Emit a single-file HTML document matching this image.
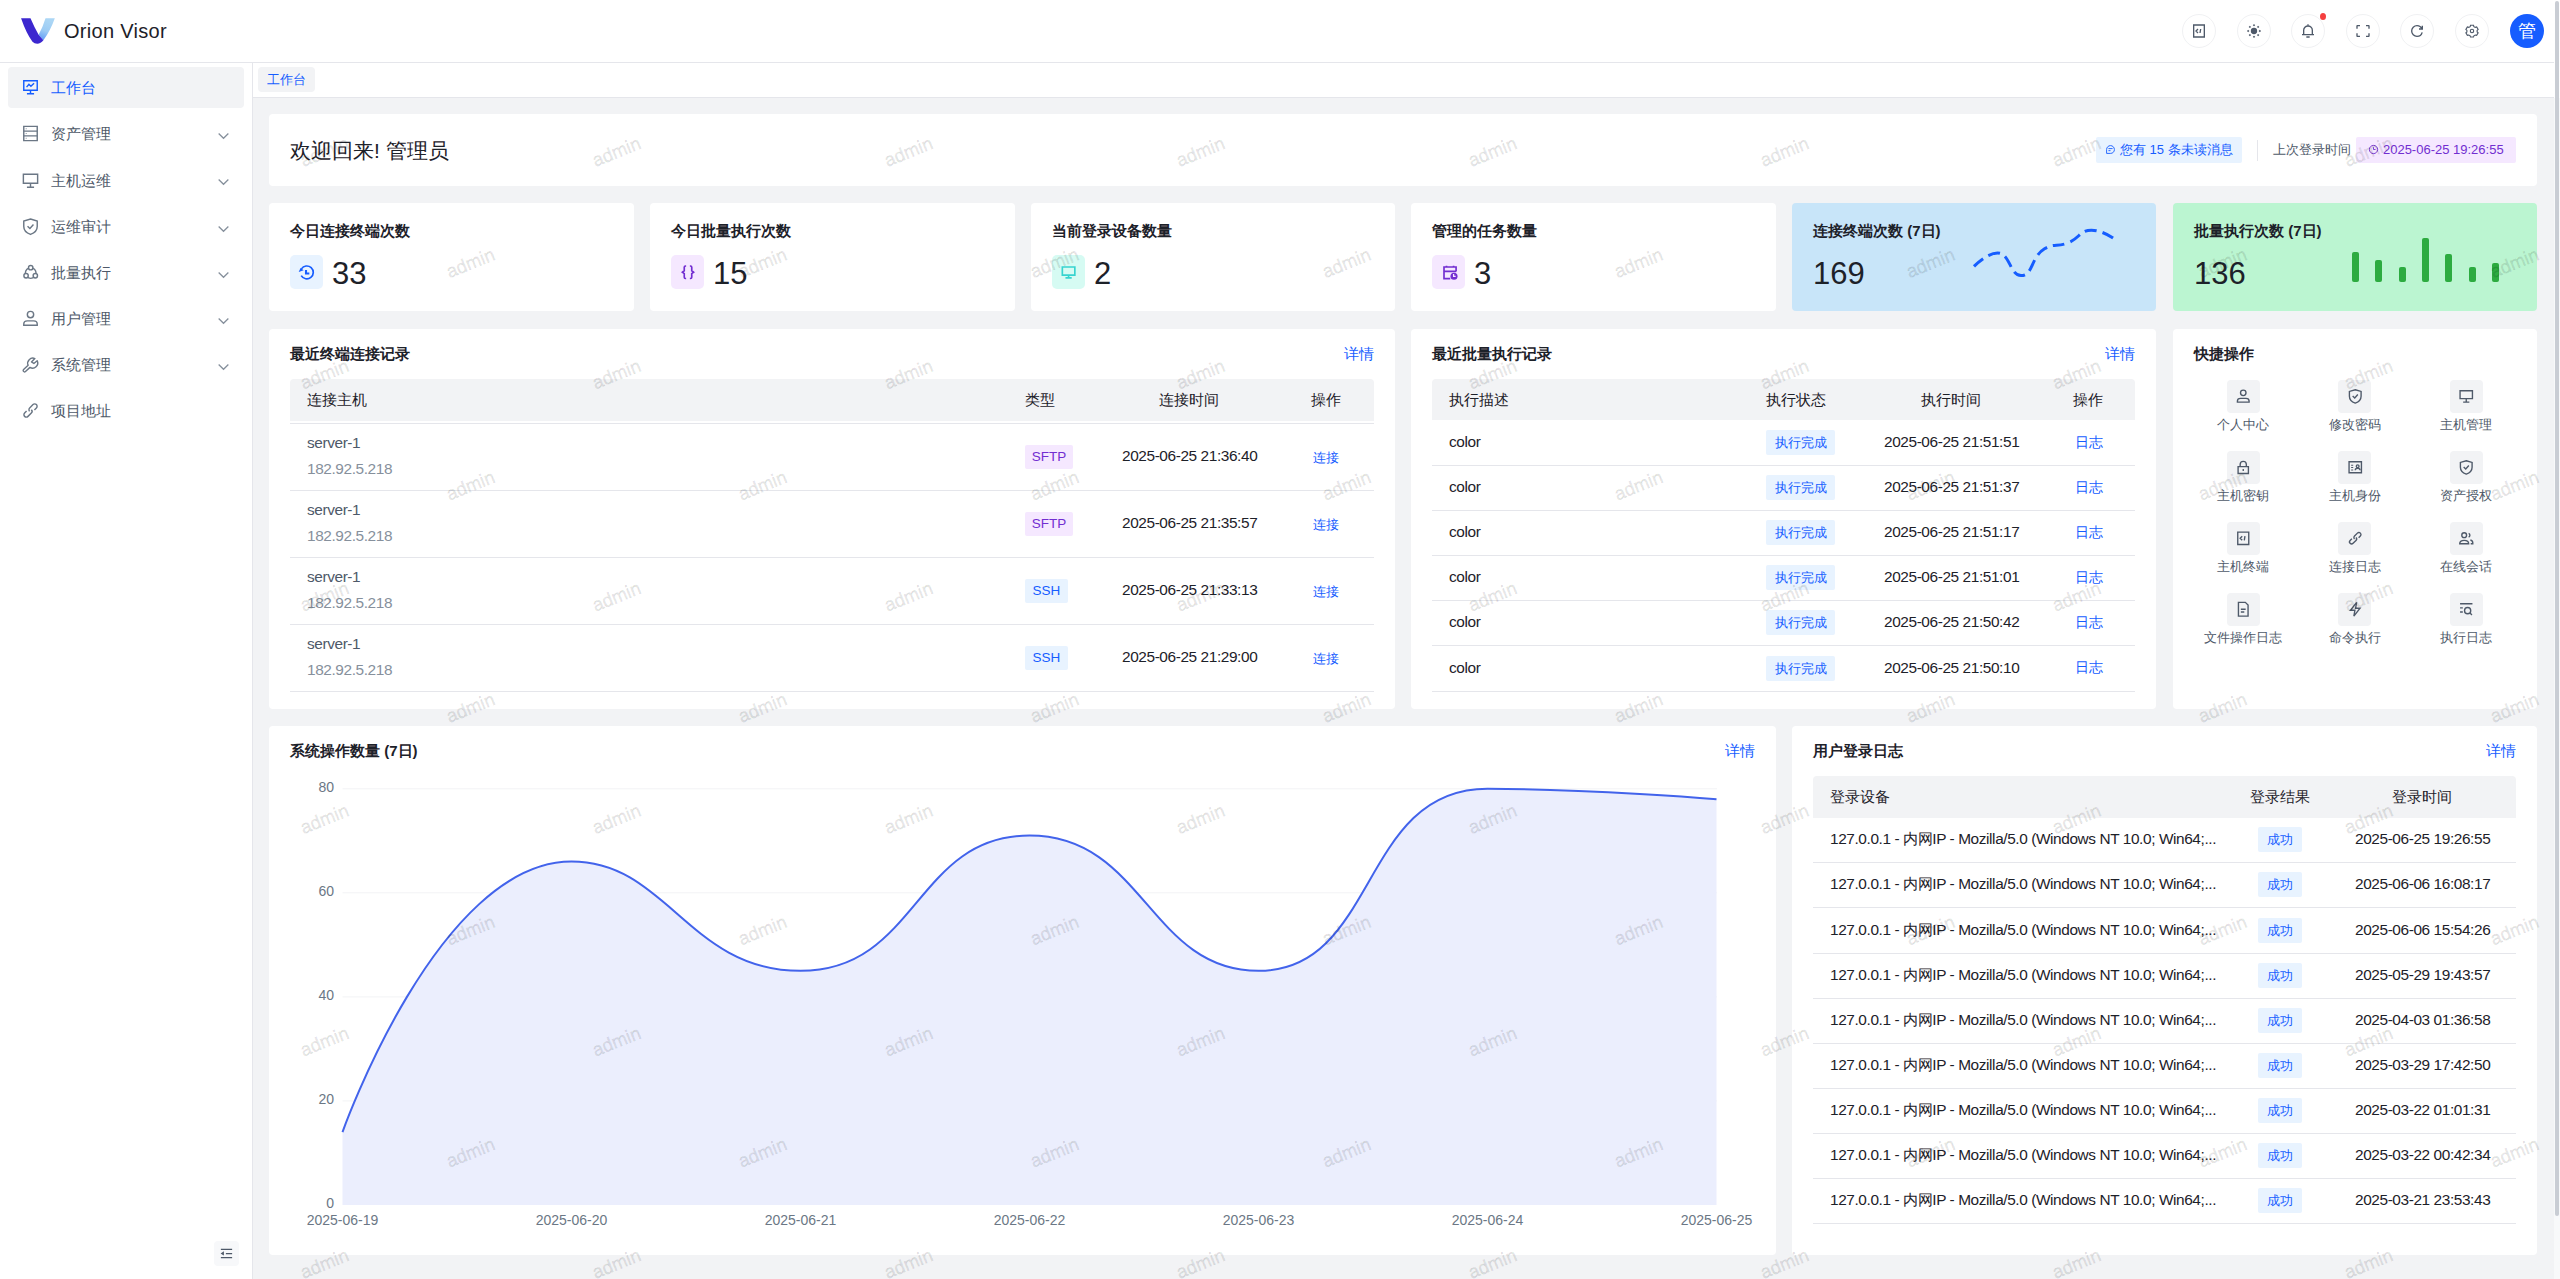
<!DOCTYPE html><html><head><meta charset="utf-8"><title>Orion Visor</title><style>
*{box-sizing:border-box;margin:0;padding:0}
html,body{width:2560px;height:1279px;overflow:hidden}
body{font-family:"Liberation Sans",sans-serif;background:#f2f3f5;color:#1d2129;position:relative;font-size:14px}
.a{position:absolute}
#hdr{left:0;top:0;width:2560px;height:63px;background:#fff;border-bottom:1px solid #e5e6eb}
#side{left:0;top:63px;width:253px;height:1216px;background:#fff;border-right:1px solid #e5e6eb}
#tabs{left:253px;top:63px;width:2301px;height:35px;background:#fff;border-bottom:1px solid #e5e6eb}
.card{position:absolute;background:#fff;border-radius:4px}
.ttl{position:absolute;font-weight:bold;font-size:15px;color:#1d2129;white-space:nowrap}
.more{position:absolute;color:#165dff;font-size:15px;white-space:nowrap}
.ic{fill:none;stroke:currentColor;stroke-width:4;stroke-linecap:butt;stroke-linejoin:miter}
.mi{position:absolute;left:8px;width:236px;height:41px;border-radius:4px;color:#4e5969;font-size:15px}
.mi svg{position:absolute}
.mi span{position:absolute;left:42.5px;top:11px;white-space:nowrap;font-size:15.3px}
.mi .chev{position:absolute;left:210px;top:15px;width:11px;height:11px}
.hb{position:absolute;top:14px;width:34px;height:34px;border-radius:50%;border:1px solid #f0f1f3;color:#4e5969}
.hb svg{position:absolute;left:8px;top:8px;width:16px;height:16px}
.th{position:absolute;background:#f2f3f5;border-radius:4px 4px 0 0}
.td{position:absolute;white-space:nowrap;color:#1d2129;font-size:15px}
.lt{font-size:15.4px;letter-spacing:-0.4px}
.tag{position:absolute;border-radius:2px;font-size:14px;text-align:center;white-space:nowrap}
.line{position:absolute;height:1px;background:#e5e6eb}
</style></head><body>
<div id="hdr" class="a">
<svg class="a" style="left:16px;top:14px" width="44" height="34" viewBox="0 0 1655 1279">
<defs><linearGradient id="lg1" x1="0" y1="1" x2="0.25" y2="0"><stop offset="0" stop-color="#5a96f8"/><stop offset="0.5" stop-color="#9ccbf4"/><stop offset="1" stop-color="#abd6f5"/></linearGradient></defs>
<path d="M1110 160 L1460 160 Q1300 620 1030 990 L850 780 Q1000 520 1110 160 Z" fill="url(#lg1)"/>
<path d="M190 160 L545 160 Q700 520 850 780 L1030 990 Q930 1120 800 1120 Q690 1110 620 1040 Q400 760 190 160 Z" fill="#3c27cf"/>
</svg>
<div class="a" style="left:64px;top:20px;font-size:20px;color:#1d2129;white-space:nowrap;letter-spacing:0.3px">Orion Visor</div>
</div>
<div class="hb" style="left:2182.0px"><svg class="ic" viewBox="0 0 48 48" width="16" height="16" style=""><g><path d="M8 6h32v36H8z"/><path d="M21 18l-6 6 6 6M27 30l2-12" stroke-width="4"/></g></svg></div>
<div class="hb" style="left:2236.5px"><svg class="ic" viewBox="0 0 48 48" width="16" height="16" style=""><g><circle cx="24" cy="24" r="9.5" fill="currentColor" stroke="none"/><g fill="currentColor" stroke="none"><path d="M41.50 20.40l3.6 3.6-3.6 3.6-3.6-3.6z"/><path d="M36.37 32.77l3.6 3.6-3.6 3.6-3.6-3.6z"/><path d="M24.00 37.90l3.6 3.6-3.6 3.6-3.6-3.6z"/><path d="M11.63 32.77l3.6 3.6-3.6 3.6-3.6-3.6z"/><path d="M6.50 20.40l3.6 3.6-3.6 3.6-3.6-3.6z"/><path d="M11.63 8.03l3.6 3.6-3.6 3.6-3.6-3.6z"/><path d="M24.00 2.90l3.6 3.6-3.6 3.6-3.6-3.6z"/><path d="M36.37 8.03l3.6 3.6-3.6 3.6-3.6-3.6z"/></g></g></svg></div>
<div class="hb" style="left:2291.0px"><svg class="ic" viewBox="0 0 48 48" width="16" height="16" style=""><g><path d="M24 9c7.2 0 13 5.8 13 13v13H11V22c0-7.2 5.8-13 13-13zM6 35h36M19 42h10M24 4v5"/></g></svg></div>
<div class="hb" style="left:2345.5px"><svg class="ic" viewBox="0 0 48 48" width="16" height="16" style=""><g><path d="M42 17V9a1 1 0 0 0-1-1h-8M6 17V9a1 1 0 0 1 1-1h8m27 23v8a1 1 0 0 1-1 1h-8M6 31v8a1 1 0 0 0 1 1h8"/></g></svg></div>
<div class="hb" style="left:2400.0px"><svg class="ic" viewBox="0 0 48 48" width="16" height="16" style=""><g><path d="M38.837 18C36.463 12.136 30.715 8 24 8 15.163 8 8 15.163 8 24s7.163 16 16 16c7.455 0 13.72-5.1 15.496-12M40 8v10H30"/></g></svg></div>
<div class="hb" style="left:2454.5px"><svg class="ic" viewBox="0 0 48 48" width="16" height="16" style=""><g><g transform="translate(24 24) scale(0.85) translate(-24 -24)"><path d="M18.8 6.1 17.5 11l-4.9 2.8-4.9-1.3-5.3 9.1L6 25.2v5.6l-3.6 3.6 5.3 9.1 4.9-1.3 4.9 2.8 1.3 4.9h10.5l1.3-4.9 4.9-2.8 4.9 1.3 5.3-9.1-3.6-3.6v-5.6l3.6-3.6-5.3-9.1-4.9 1.3-4.9-2.8-1.3-4.9z" transform="translate(0 -2) scale(1 0.95)"/><circle cx="24" cy="24" r="6"/></g></g></svg></div>
<div class="a" style="left:2320px;top:13px;width:6px;height:7px;border-radius:50%;background:#f53f3f"></div>
<div class="a" style="left:2510px;top:14px;width:34px;height:34px;border-radius:50%;background:#165dff;color:#fff;font-size:18px;line-height:34px;text-align:center">管</div>
<div id="side" class="a">
<div class="mi" style="top:4.2px;background:#f2f3f5;color:#165dff;"><svg class="ic" viewBox="0 0 48 48" width="19" height="19" style="left:12.6px;top:11px;width:19px;height:19px"><g style="stroke-width:3.6"><path d="M7 7h34v24H7z"/><path d="M24 31v9m-9 0h18"/><path d="M14 23l6-7 5 5 8-8" stroke-width="3.5"/></g></svg><span>工作台</span></div>
<div class="mi" style="top:50.2px;"><svg class="ic" viewBox="0 0 48 48" width="19" height="19" style="left:12.6px;top:11px;width:19px;height:19px;color:#6b7785"><g style="stroke-width:3.6"><path d="M7 6h34v36H7z"/><path d="M7 18h34M7 30h34"/><path d="M12 12h2M12 24h2M12 36h2" stroke-width="3"/></g></svg><span>资产管理</span><svg class="ic" viewBox="0 0 48 48" width="15" height="15" style="left:208px;top:14.8px;width:15px;height:15px;color:#86909c"><g style="stroke-width:4"><path d="M39.6 17.443 24.043 33 8.487 17.443"/></g></svg></div>
<div class="mi" style="top:96.7px;"><svg class="ic" viewBox="0 0 48 48" width="19" height="19" style="left:12.6px;top:11px;width:19px;height:19px;color:#6b7785"><g style="stroke-width:3.6"><path d="M6 8h36v23H6z"/><path d="M24 31v10m-9 0h18"/></g></svg><span>主机运维</span><svg class="ic" viewBox="0 0 48 48" width="15" height="15" style="left:208px;top:14.8px;width:15px;height:15px;color:#86909c"><g style="stroke-width:4"><path d="M39.6 17.443 24.043 33 8.487 17.443"/></g></svg></div>
<div class="mi" style="top:143.2px;"><svg class="ic" viewBox="0 0 48 48" width="19" height="19" style="left:12.6px;top:11px;width:19px;height:19px;color:#6b7785"><g style="stroke-width:3.6"><path d="M24 5 41 10v14c0 9.5-7 16.5-17 20-10-3.5-17-10.5-17-20V10z"/><path d="m16.5 23.5 6 5.5 9-10"/></g></svg><span>运维审计</span><svg class="ic" viewBox="0 0 48 48" width="15" height="15" style="left:208px;top:14.8px;width:15px;height:15px;color:#86909c"><g style="stroke-width:4"><path d="M39.6 17.443 24.043 33 8.487 17.443"/></g></svg></div>
<div class="mi" style="top:189.2px;"><svg class="ic" viewBox="0 0 48 48" width="19" height="19" style="left:12.6px;top:11px;width:19px;height:19px;color:#6b7785"><g style="stroke-width:3.6"><circle cx="24.5" cy="25.4" r="13.5"/><g fill="#fff"><circle cx="24.5" cy="11.9" r="5.5"/><circle cx="12.8" cy="32.2" r="5.5"/><circle cx="36.2" cy="32.2" r="5.5"/></g></g></svg><span>批量执行</span><svg class="ic" viewBox="0 0 48 48" width="15" height="15" style="left:208px;top:14.8px;width:15px;height:15px;color:#86909c"><g style="stroke-width:4"><path d="M39.6 17.443 24.043 33 8.487 17.443"/></g></svg></div>
<div class="mi" style="top:235.2px;"><svg class="ic" viewBox="0 0 48 48" width="19" height="19" style="left:12.6px;top:11px;width:19px;height:19px;color:#6b7785"><g style="stroke-width:3.6"><circle cx="24" cy="14" r="8"/><path d="M7 38c0-5 4-8 9-8h16c5 0 9 3 9 8v3H7z"/></g></svg><span>用户管理</span><svg class="ic" viewBox="0 0 48 48" width="15" height="15" style="left:208px;top:14.8px;width:15px;height:15px;color:#86909c"><g style="stroke-width:4"><path d="M39.6 17.443 24.043 33 8.487 17.443"/></g></svg></div>
<div class="mi" style="top:281.2px;"><svg class="ic" viewBox="0 0 48 48" width="19" height="19" style="left:12.6px;top:11px;width:19px;height:19px;color:#6b7785"><g style="stroke-width:3.6"><path stroke-linejoin="round" d="M26.5 17.5 L35 9 A13 13 0 0 0 18 26.1 L6.6 36.4 A3.5 3.5 0 0 0 11.3 41.6 L22.7 31.3 A13 13 0 0 0 41 14.5 L32.5 21.5 Z"/></g></svg><span>系统管理</span><svg class="ic" viewBox="0 0 48 48" width="15" height="15" style="left:208px;top:14.8px;width:15px;height:15px;color:#86909c"><g style="stroke-width:4"><path d="M39.6 17.443 24.043 33 8.487 17.443"/></g></svg></div>
<div class="mi" style="top:327.2px;"><svg class="ic" viewBox="0 0 48 48" width="19" height="19" style="left:12.6px;top:11px;width:19px;height:19px;color:#6b7785"><g style="stroke-width:3.6"><path d="m14.1 25.4-4.95 4.95a6 6 0 0 0 8.49 8.49l8.48-8.49a6 6 0 0 0 0-8.48m7.78.7 4.95-4.95a6 6 0 1 0-8.49-8.48l-8.48 8.48a6 6 0 0 0 0 8.49"/></g></svg><span>项目地址</span></div>
<div class="a" style="left:214px;top:1178px;width:25px;height:25px;border-radius:4px;background:#f7f8fa;color:#4e5969"><svg class="ic" viewBox="0 0 48 48" width="15" height="15" style="position:absolute;left:5px;top:5px"><g><path d="M42 11H6M42 24H22M42 37H6M13.66 26.912l-4.82-3.118 4.82-3.118v6.236Z"/></g></svg></div>
</div>
<div id="tabs" class="a"><div class="a" style="left:5px;top:4px;width:57px;height:25px;background:#f2f3f5;border-radius:4px;color:#165dff;font-size:13px;line-height:25px;text-align:center">工作台</div></div>
<div class="card" style="left:269px;top:114px;width:2268px;height:72px">
<div class="a" style="left:21px;top:23px;font-size:21px;color:#1d2129;white-space:nowrap">欢迎回来! 管理员</div>
<div class="tag" style="left:1827px;top:23px;width:146px;height:26px;line-height:26px;background:#e8f3ff;color:#165dff;font-size:13px"><svg class="ic" viewBox="0 0 48 48" width="11" height="11" style="vertical-align:-1px"><g><path d="M15 20h18m-18 9h9M7 41h17.63C33.67 41 41 33.67 41 24.63V24c0-9.39-7.61-17-17-17S7 14.61 7 24v17Z"/></g></svg> 您有 15 条未读消息</div>
<div class="a" style="left:1988px;top:26px;width:1px;height:21px;background:#e5e6eb"></div>
<div class="a" style="left:2004px;top:27px;font-size:13px;color:#4e5969;white-space:nowrap">上次登录时间</div>
<div class="tag" style="left:2087px;top:23px;width:160px;height:26px;line-height:26px;background:#f5e8ff;color:#722ed1;font-size:13px"><svg class="ic" viewBox="0 0 48 48" width="11" height="11" style="vertical-align:-1px"><g><circle cx="24" cy="24" r="18"/><path d="M24 14v10h9"/></g></svg> 2025-06-25 19:26:55</div>
</div>
<div class="card" style="left:269.00px;top:203px;width:364.50px;height:108px">
<div class="ttl" style="left:21px;top:19px">今日连接终端次数</div>
<div class="a" style="left:21px;top:52px;width:33px;height:34px;border-radius:5px;background:#e8f3ff;color:#165dff"><svg class="ic" viewBox="0 0 48 48" width="20" height="20" style="position:absolute;left:6.5px;top:7px"><g><path d="M10.1 32.75A15.5 15.5 0 1 0 10.6 16.5"/><path d="M4 24 8.5 14.5 16 19.5z" fill="currentColor" stroke="none"/><path d="M21.6 19v8.6h8" stroke-width="5"/></g></svg></div>
<div class="a" style="left:63px;top:53px;font-size:31px;color:#1d2129">33</div>
</div>
<div class="card" style="left:650.00px;top:203px;width:364.50px;height:108px">
<div class="ttl" style="left:21px;top:19px">今日批量执行次数</div>
<div class="a" style="left:21px;top:52px;width:33px;height:34px;border-radius:5px;background:#f5e8ff;color:#722ed1"><svg class="ic" viewBox="0 0 48 48" width="20" height="20" style="position:absolute;left:6.5px;top:7px"><g><path d="M19.5 9.5h-1.5a3 3 0 0 0-3 3v8.5l-4.5 3.5 4.5 3.5v8.5a3 3 0 0 0 3 3h1.5M28.5 9.5h1.5a3 3 0 0 1 3 3v8.5l4.5 3.5-4.5 3.5v8.5a3 3 0 0 1-3 3h-1.5"/></g></svg></div>
<div class="a" style="left:63px;top:53px;font-size:31px;color:#1d2129">15</div>
</div>
<div class="card" style="left:1031.00px;top:203px;width:364.30px;height:108px">
<div class="ttl" style="left:21px;top:19px">当前登录设备数量</div>
<div class="a" style="left:21px;top:52px;width:33px;height:34px;border-radius:5px;background:#d6fbf3;color:#37d4cf"><svg class="ic" viewBox="0 0 48 48" width="20" height="20" style="position:absolute;left:6.5px;top:7px"><g><path d="M8 12h30v19.5H8z"/><path d="M23 31.5v6.5m-7.5 0h15"/></g></svg></div>
<div class="a" style="left:63px;top:53px;font-size:31px;color:#1d2129">2</div>
</div>
<div class="card" style="left:1411.00px;top:203px;width:364.70px;height:108px">
<div class="ttl" style="left:21px;top:19px">管理的任务数量</div>
<div class="a" style="left:21px;top:52px;width:33px;height:34px;border-radius:5px;background:#f5e8ff;color:#722ed1"><svg class="ic" viewBox="0 0 48 48" width="20" height="20" style="position:absolute;left:6.5px;top:7px"><g><path d="M27 40H12V12h29v11M12 22.5h29M18 9v5M35 9v5"/><circle cx="36" cy="34" r="8.5" fill="currentColor" stroke="none"/><path d="M35 29v5.5h5" stroke="#f5e8ff" stroke-width="3"/></g></svg></div>
<div class="a" style="left:63px;top:53px;font-size:31px;color:#1d2129">3</div>
</div>
<div class="card" style="left:1792.00px;top:203px;width:364.30px;height:108px;background:#c8e5f9">
<div class="ttl" style="left:21px;top:19px">连接终端次数 (7日)</div>
<div class="a" style="left:21px;top:53px;font-size:31px;color:#1d2129">169</div>
<svg class="a" style="left:0;top:0" width="364" height="108"><path d="M182.00 63.40 C182.00 63.40 194.84 50.00 205.50 50.00 C218.34 50.00 217.77 72.60 229.00 72.60 C241.27 72.60 238.51 54.48 252.50 45.80 C262.01 39.90 264.82 44.32 276.00 39.90 C288.32 35.02 287.41 27.20 299.50 27.20 C310.91 27.20 323.00 36.30 323.00 36.30" fill="none" stroke="#165dff" stroke-width="3" stroke-dasharray="12 6"/></svg>
</div>
<div class="card" style="left:2173.00px;top:203px;width:364.00px;height:108px;background:#bbf5d1">
<div class="ttl" style="left:21px;top:19px">批量执行次数 (7日)</div>
<div class="a" style="left:21px;top:53px;font-size:31px;color:#1d2129">136</div>
<div class="a" style="left:178.6px;top:49.4px;width:7.2px;height:29.2px;background:#2cab40;border-radius:2px"></div>
<div class="a" style="left:202.0px;top:57.2px;width:7.2px;height:21.4px;background:#2cab40;border-radius:2px"></div>
<div class="a" style="left:225.5px;top:63.5px;width:7.2px;height:15.1px;background:#2cab40;border-radius:2px"></div>
<div class="a" style="left:248.9px;top:34.7px;width:7.2px;height:43.9px;background:#2cab40;border-radius:2px"></div>
<div class="a" style="left:272.3px;top:51.0px;width:7.2px;height:27.6px;background:#2cab40;border-radius:2px"></div>
<div class="a" style="left:295.8px;top:63.5px;width:7.2px;height:15.1px;background:#2cab40;border-radius:2px"></div>
<div class="a" style="left:319.2px;top:60.0px;width:7.2px;height:18.6px;background:#2cab40;border-radius:2px"></div>
</div>
<div class="card" style="left:269.00px;top:329px;width:1126.30px;height:380px">
<div class="ttl" style="left:21px;top:16px">最近终端连接记录</div>
<div class="more" style="left:1075.3px;top:16px">详情</div>
<div class="th" style="left:21px;top:50px;width:1084.3px;height:42px"></div>
<div class="line" style="left:21px;top:94px;width:1084.3px"></div>
<div class="td" style="left:38px;top:62px">连接主机</div>
<div class="td" style="left:756px;top:62px">类型</div>
<div class="td" style="left:890px;top:62px">连接时间</div>
<div class="td" style="left:1042px;top:62px">操作</div>
<div class="td lt" style="left:38px;top:105px;color:#4e5969">server-1</div>
<div class="td lt" style="left:38px;top:131px;color:#86909c">182.92.5.218</div>
<div class="tag" style="left:756px;top:116px;width:48px;height:24px;line-height:24px;background:#f5e8ff;color:#722ed1;font-size:13.5px">SFTP</div>
<div class="td lt" style="left:853px;top:118px">2025-06-25 21:36:40</div>
<div class="td" style="left:1044px;top:120px;color:#165dff;font-size:13px">连接</div>
<div class="line" style="left:21px;top:161px;width:1084.3px"></div>
<div class="td lt" style="left:38px;top:172px;color:#4e5969">server-1</div>
<div class="td lt" style="left:38px;top:198px;color:#86909c">182.92.5.218</div>
<div class="tag" style="left:756px;top:183px;width:48px;height:24px;line-height:24px;background:#f5e8ff;color:#722ed1;font-size:13.5px">SFTP</div>
<div class="td lt" style="left:853px;top:185px">2025-06-25 21:35:57</div>
<div class="td" style="left:1044px;top:187px;color:#165dff;font-size:13px">连接</div>
<div class="line" style="left:21px;top:228px;width:1084.3px"></div>
<div class="td lt" style="left:38px;top:239px;color:#4e5969">server-1</div>
<div class="td lt" style="left:38px;top:265px;color:#86909c">182.92.5.218</div>
<div class="tag" style="left:756px;top:250px;width:43px;height:24px;line-height:24px;background:#e8f3ff;color:#165dff;font-size:13.5px">SSH</div>
<div class="td lt" style="left:853px;top:252px">2025-06-25 21:33:13</div>
<div class="td" style="left:1044px;top:254px;color:#165dff;font-size:13px">连接</div>
<div class="line" style="left:21px;top:295px;width:1084.3px"></div>
<div class="td lt" style="left:38px;top:306px;color:#4e5969">server-1</div>
<div class="td lt" style="left:38px;top:332px;color:#86909c">182.92.5.218</div>
<div class="tag" style="left:756px;top:317px;width:43px;height:24px;line-height:24px;background:#e8f3ff;color:#165dff;font-size:13.5px">SSH</div>
<div class="td lt" style="left:853px;top:319px">2025-06-25 21:29:00</div>
<div class="td" style="left:1044px;top:321px;color:#165dff;font-size:13px">连接</div>
<div class="line" style="left:21px;top:362px;width:1084.3px"></div>
</div>
<div class="card" style="left:1411.00px;top:329px;width:745.30px;height:380px">
<div class="ttl" style="left:21px;top:16px">最近批量执行记录</div>
<div class="more" style="left:694.3px;top:16px">详情</div>
<div class="th" style="left:21px;top:50px;width:703.3px;height:41px"></div>
<div class="td" style="left:38px;top:62px">执行描述</div>
<div class="td" style="left:355px;top:62px">执行状态</div>
<div class="td" style="left:510px;top:62px">执行时间</div>
<div class="td" style="left:662px;top:62px">操作</div>
<div class="td lt" style="left:38px;top:104.0px">color</div>
<div class="tag" style="left:355px;top:101.0px;width:69px;height:25px;line-height:25px;background:#e8f3ff;color:#165dff;font-size:13px">执行完成</div>
<div class="td lt" style="left:473px;top:104.0px">2025-06-25 21:51:51</div>
<div class="td" style="left:663.5px;top:104.5px;color:#165dff;font-size:13.5px">日志</div>
<div class="line" style="left:21px;top:136.0px;width:703.3px"></div>
<div class="td lt" style="left:38px;top:149.1px">color</div>
<div class="tag" style="left:355px;top:146.1px;width:69px;height:25px;line-height:25px;background:#e8f3ff;color:#165dff;font-size:13px">执行完成</div>
<div class="td lt" style="left:473px;top:149.1px">2025-06-25 21:51:37</div>
<div class="td" style="left:663.5px;top:149.6px;color:#165dff;font-size:13.5px">日志</div>
<div class="line" style="left:21px;top:181.1px;width:703.3px"></div>
<div class="td lt" style="left:38px;top:194.2px">color</div>
<div class="tag" style="left:355px;top:191.2px;width:69px;height:25px;line-height:25px;background:#e8f3ff;color:#165dff;font-size:13px">执行完成</div>
<div class="td lt" style="left:473px;top:194.2px">2025-06-25 21:51:17</div>
<div class="td" style="left:663.5px;top:194.7px;color:#165dff;font-size:13.5px">日志</div>
<div class="line" style="left:21px;top:226.2px;width:703.3px"></div>
<div class="td lt" style="left:38px;top:239.3px">color</div>
<div class="tag" style="left:355px;top:236.3px;width:69px;height:25px;line-height:25px;background:#e8f3ff;color:#165dff;font-size:13px">执行完成</div>
<div class="td lt" style="left:473px;top:239.3px">2025-06-25 21:51:01</div>
<div class="td" style="left:663.5px;top:239.8px;color:#165dff;font-size:13.5px">日志</div>
<div class="line" style="left:21px;top:271.3px;width:703.3px"></div>
<div class="td lt" style="left:38px;top:284.4px">color</div>
<div class="tag" style="left:355px;top:281.4px;width:69px;height:25px;line-height:25px;background:#e8f3ff;color:#165dff;font-size:13px">执行完成</div>
<div class="td lt" style="left:473px;top:284.4px">2025-06-25 21:50:42</div>
<div class="td" style="left:663.5px;top:284.9px;color:#165dff;font-size:13.5px">日志</div>
<div class="line" style="left:21px;top:316.4px;width:703.3px"></div>
<div class="td lt" style="left:38px;top:329.5px">color</div>
<div class="tag" style="left:355px;top:326.5px;width:69px;height:25px;line-height:25px;background:#e8f3ff;color:#165dff;font-size:13px">执行完成</div>
<div class="td lt" style="left:473px;top:329.5px">2025-06-25 21:50:10</div>
<div class="td" style="left:663.5px;top:330.0px;color:#165dff;font-size:13.5px">日志</div>
<div class="line" style="left:21px;top:361.5px;width:703.3px"></div>
</div>
<div class="card" style="left:2173.00px;top:329px;width:364.00px;height:380px">
<div class="ttl" style="left:21px;top:16px">快捷操作</div>
<div class="a" style="left:53.9px;top:50.5px;width:33px;height:33px;border-radius:4px;background:#f2f3f5;color:#4e5969"><svg class="ic" viewBox="0 0 48 48" width="16.5" height="16.5" style="position:absolute;left:8.25px;top:8.25px"><g><circle cx="24" cy="14" r="8"/><path d="M7 38c0-5 4-8 9-8h16c5 0 9 3 9 8v3H7z"/></g></svg></div>
<div class="a" style="left:10.4px;top:86.5px;width:120px;text-align:center;font-size:13px;color:#4e5969;white-space:nowrap">个人中心</div>
<div class="a" style="left:165.4px;top:50.5px;width:33px;height:33px;border-radius:4px;background:#f2f3f5;color:#4e5969"><svg class="ic" viewBox="0 0 48 48" width="16.5" height="16.5" style="position:absolute;left:8.25px;top:8.25px"><g><path d="M24 5 41 10v14c0 9.5-7 16.5-17 20-10-3.5-17-10.5-17-20V10z"/><path d="m16.5 23.5 6 5.5 9-10"/></g></svg></div>
<div class="a" style="left:121.9px;top:86.5px;width:120px;text-align:center;font-size:13px;color:#4e5969;white-space:nowrap">修改密码</div>
<div class="a" style="left:276.9px;top:50.5px;width:33px;height:33px;border-radius:4px;background:#f2f3f5;color:#4e5969"><svg class="ic" viewBox="0 0 48 48" width="16.5" height="16.5" style="position:absolute;left:8.25px;top:8.25px"><g><path d="M6 8h36v23H6z"/><path d="M24 31v10m-9 0h18"/></g></svg></div>
<div class="a" style="left:233.4px;top:86.5px;width:120px;text-align:center;font-size:13px;color:#4e5969;white-space:nowrap">主机管理</div>
<div class="a" style="left:53.9px;top:121.6px;width:33px;height:33px;border-radius:4px;background:#f2f3f5;color:#4e5969"><svg class="ic" viewBox="0 0 48 48" width="16.5" height="16.5" style="position:absolute;left:8.25px;top:8.25px"><g><path d="M9 22h30v20H9z"/><path d="M15 22v-6a9 9 0 0 1 18 0v6"/><path d="M24 29v6"/></g></svg></div>
<div class="a" style="left:10.4px;top:157.6px;width:120px;text-align:center;font-size:13px;color:#4e5969;white-space:nowrap">主机密钥</div>
<div class="a" style="left:165.4px;top:121.6px;width:33px;height:33px;border-radius:4px;background:#f2f3f5;color:#4e5969"><svg class="ic" viewBox="0 0 48 48" width="16.5" height="16.5" style="position:absolute;left:8.25px;top:8.25px"><g><path d="M6 8h36v32H6z"/><path d="M12 18h6M12 25h6M12 32h6" stroke-width="3"/><circle cx="31" cy="21" r="4"/><path d="M24 33c0-4 3-6 7-6s7 2 7 6"/></g></svg></div>
<div class="a" style="left:121.9px;top:157.6px;width:120px;text-align:center;font-size:13px;color:#4e5969;white-space:nowrap">主机身份</div>
<div class="a" style="left:276.9px;top:121.6px;width:33px;height:33px;border-radius:4px;background:#f2f3f5;color:#4e5969"><svg class="ic" viewBox="0 0 48 48" width="16.5" height="16.5" style="position:absolute;left:8.25px;top:8.25px"><g><path d="M24 5 41 10v14c0 9.5-7 16.5-17 20-10-3.5-17-10.5-17-20V10z"/><path d="m16.5 23.5 6 5.5 9-10"/></g></svg></div>
<div class="a" style="left:233.4px;top:157.6px;width:120px;text-align:center;font-size:13px;color:#4e5969;white-space:nowrap">资产授权</div>
<div class="a" style="left:53.9px;top:192.7px;width:33px;height:33px;border-radius:4px;background:#f2f3f5;color:#4e5969"><svg class="ic" viewBox="0 0 48 48" width="16.5" height="16.5" style="position:absolute;left:8.25px;top:8.25px"><g><path d="M8 6h32v36H8z"/><path d="M21 18l-6 6 6 6M27 30l2-12" stroke-width="4"/></g></svg></div>
<div class="a" style="left:10.4px;top:228.7px;width:120px;text-align:center;font-size:13px;color:#4e5969;white-space:nowrap">主机终端</div>
<div class="a" style="left:165.4px;top:192.7px;width:33px;height:33px;border-radius:4px;background:#f2f3f5;color:#4e5969"><svg class="ic" viewBox="0 0 48 48" width="16.5" height="16.5" style="position:absolute;left:8.25px;top:8.25px"><g><path d="m14.1 25.4-4.95 4.95a6 6 0 0 0 8.49 8.49l8.48-8.49a6 6 0 0 0 0-8.48m7.78.7 4.95-4.95a6 6 0 1 0-8.49-8.48l-8.48 8.48a6 6 0 0 0 0 8.49"/></g></svg></div>
<div class="a" style="left:121.9px;top:228.7px;width:120px;text-align:center;font-size:13px;color:#4e5969;white-space:nowrap">连接日志</div>
<div class="a" style="left:276.9px;top:192.7px;width:33px;height:33px;border-radius:4px;background:#f2f3f5;color:#4e5969"><svg class="ic" viewBox="0 0 48 48" width="16.5" height="16.5" style="position:absolute;left:8.25px;top:8.25px"><g><circle cx="18" cy="15" r="7"/><path d="M5 40c0-7 5-10 13-10s13 3 13 10z"/><path d="M31 10a6 6 0 0 1 0 11M36 29c4 1 7 4 7 8v3h-6"/></g></svg></div>
<div class="a" style="left:233.4px;top:228.7px;width:120px;text-align:center;font-size:13px;color:#4e5969;white-space:nowrap">在线会话</div>
<div class="a" style="left:53.9px;top:263.8px;width:33px;height:33px;border-radius:4px;background:#f2f3f5;color:#4e5969"><svg class="ic" viewBox="0 0 48 48" width="16.5" height="16.5" style="position:absolute;left:8.25px;top:8.25px"><g><path d="M10 4h20l8 8v32H10z"/><path d="M17 24h14M17 32h10"/></g></svg></div>
<div class="a" style="left:10.4px;top:299.8px;width:120px;text-align:center;font-size:13px;color:#4e5969;white-space:nowrap">文件操作日志</div>
<div class="a" style="left:165.4px;top:263.8px;width:33px;height:33px;border-radius:4px;background:#f2f3f5;color:#4e5969"><svg class="ic" viewBox="0 0 48 48" width="16.5" height="16.5" style="position:absolute;left:8.25px;top:8.25px"><g><path d="M28 4 10 27h13l-3 17 18-23H25z"/></g></svg></div>
<div class="a" style="left:121.9px;top:299.8px;width:120px;text-align:center;font-size:13px;color:#4e5969;white-space:nowrap">命令执行</div>
<div class="a" style="left:276.9px;top:263.8px;width:33px;height:33px;border-radius:4px;background:#f2f3f5;color:#4e5969"><svg class="ic" viewBox="0 0 48 48" width="16.5" height="16.5" style="position:absolute;left:8.25px;top:8.25px"><g><path d="M6 8h36M6 20h8M6 32h8"/><circle cx="28" cy="28" r="9"/><path d="m34.5 34.5 6 6"/></g></svg></div>
<div class="a" style="left:233.4px;top:299.8px;width:120px;text-align:center;font-size:13px;color:#4e5969;white-space:nowrap">执行日志</div>
</div>
<div class="card" style="left:269.00px;top:726px;width:1506.70px;height:529px">
<div class="ttl" style="left:21px;top:16px">系统操作数量 (7日)</div>
<div class="more" style="left:1455.7px;top:16px">详情</div>
</div>
<svg class="a" style="left:0;top:0" width="2560" height="1279">
<text x="334" y="1208.3" text-anchor="end" font-size="14" fill="#6b7785" font-family="Liberation Sans">0</text>
<line x1="342.5" x2="1717" y1="1100.9" y2="1100.9" stroke="#f2f3f5" stroke-width="1"/>
<text x="334" y="1104.2" text-anchor="end" font-size="14" fill="#6b7785" font-family="Liberation Sans">20</text>
<line x1="342.5" x2="1717" y1="996.9" y2="996.9" stroke="#f2f3f5" stroke-width="1"/>
<text x="334" y="1000.2" text-anchor="end" font-size="14" fill="#6b7785" font-family="Liberation Sans">40</text>
<line x1="342.5" x2="1717" y1="892.8" y2="892.8" stroke="#f2f3f5" stroke-width="1"/>
<text x="334" y="896.1" text-anchor="end" font-size="14" fill="#6b7785" font-family="Liberation Sans">60</text>
<line x1="342.5" x2="1717" y1="788.8" y2="788.8" stroke="#f2f3f5" stroke-width="1"/>
<text x="334" y="792.0" text-anchor="end" font-size="14" fill="#6b7785" font-family="Liberation Sans">80</text>
<path d="M342.50 1132.16 C342.50 1132.16 438.04 861.59 571.50 861.59 C667.04 861.59 688.70 970.86 800.50 970.86 C917.70 970.86 915.00 835.58 1029.50 835.58 C1144.00 835.58 1149.45 970.86 1258.50 970.86 C1378.45 970.86 1359.10 788.75 1487.50 788.75 C1588.10 788.75 1716.50 799.16 1716.50 799.16 L1716.5 1205.0 L342.5 1205.0 Z" fill="#ebeefd"/>
<path d="M342.50 1132.16 C342.50 1132.16 438.04 861.59 571.50 861.59 C667.04 861.59 688.70 970.86 800.50 970.86 C917.70 970.86 915.00 835.58 1029.50 835.58 C1144.00 835.58 1149.45 970.86 1258.50 970.86 C1378.45 970.86 1359.10 788.75 1487.50 788.75 C1588.10 788.75 1716.50 799.16 1716.50 799.16" fill="none" stroke="#4263eb" stroke-width="2"/>
<text x="342.5" y="1224.7" text-anchor="middle" font-size="14" fill="#6b7785" font-family="Liberation Sans">2025-06-19</text>
<text x="571.5" y="1224.7" text-anchor="middle" font-size="14" fill="#6b7785" font-family="Liberation Sans">2025-06-20</text>
<text x="800.5" y="1224.7" text-anchor="middle" font-size="14" fill="#6b7785" font-family="Liberation Sans">2025-06-21</text>
<text x="1029.5" y="1224.7" text-anchor="middle" font-size="14" fill="#6b7785" font-family="Liberation Sans">2025-06-22</text>
<text x="1258.5" y="1224.7" text-anchor="middle" font-size="14" fill="#6b7785" font-family="Liberation Sans">2025-06-23</text>
<text x="1487.5" y="1224.7" text-anchor="middle" font-size="14" fill="#6b7785" font-family="Liberation Sans">2025-06-24</text>
<text x="1716.5" y="1224.7" text-anchor="middle" font-size="14" fill="#6b7785" font-family="Liberation Sans">2025-06-25</text>
</svg>
<div class="card" style="left:1792.00px;top:726px;width:745.00px;height:529px">
<div class="ttl" style="left:21px;top:16px">用户登录日志</div>
<div class="more" style="left:694.0px;top:16px">详情</div>
<div class="th" style="left:21px;top:50px;width:703.0px;height:42px"></div>
<div class="td" style="left:38px;top:62px">登录设备</div>
<div class="td" style="left:458px;top:62px">登录结果</div>
<div class="td" style="left:600px;top:62px">登录时间</div>
<div class="td lt" style="left:38px;top:103.4px">127.0.0.1 - 内网IP - Mozilla/5.0 (Windows NT 10.0; Win64;...</div>
<div class="tag" style="left:466px;top:101.4px;width:44px;height:25px;line-height:25px;background:#e8f3ff;color:#165dff;font-size:13px">成功</div>
<div class="td lt" style="left:563px;top:104.4px">2025-06-25 19:26:55</div>
<div class="line" style="left:21px;top:136.4px;width:703.0px"></div>
<div class="td lt" style="left:38px;top:148.4px">127.0.0.1 - 内网IP - Mozilla/5.0 (Windows NT 10.0; Win64;...</div>
<div class="tag" style="left:466px;top:146.4px;width:44px;height:25px;line-height:25px;background:#e8f3ff;color:#165dff;font-size:13px">成功</div>
<div class="td lt" style="left:563px;top:149.4px">2025-06-06 16:08:17</div>
<div class="line" style="left:21px;top:181.4px;width:703.0px"></div>
<div class="td lt" style="left:38px;top:193.5px">127.0.0.1 - 内网IP - Mozilla/5.0 (Windows NT 10.0; Win64;...</div>
<div class="tag" style="left:466px;top:191.5px;width:44px;height:25px;line-height:25px;background:#e8f3ff;color:#165dff;font-size:13px">成功</div>
<div class="td lt" style="left:563px;top:194.5px">2025-06-06 15:54:26</div>
<div class="line" style="left:21px;top:226.5px;width:703.0px"></div>
<div class="td lt" style="left:38px;top:238.5px">127.0.0.1 - 内网IP - Mozilla/5.0 (Windows NT 10.0; Win64;...</div>
<div class="tag" style="left:466px;top:236.5px;width:44px;height:25px;line-height:25px;background:#e8f3ff;color:#165dff;font-size:13px">成功</div>
<div class="td lt" style="left:563px;top:239.5px">2025-05-29 19:43:57</div>
<div class="line" style="left:21px;top:271.5px;width:703.0px"></div>
<div class="td lt" style="left:38px;top:283.6px">127.0.0.1 - 内网IP - Mozilla/5.0 (Windows NT 10.0; Win64;...</div>
<div class="tag" style="left:466px;top:281.6px;width:44px;height:25px;line-height:25px;background:#e8f3ff;color:#165dff;font-size:13px">成功</div>
<div class="td lt" style="left:563px;top:284.6px">2025-04-03 01:36:58</div>
<div class="line" style="left:21px;top:316.6px;width:703.0px"></div>
<div class="td lt" style="left:38px;top:328.6px">127.0.0.1 - 内网IP - Mozilla/5.0 (Windows NT 10.0; Win64;...</div>
<div class="tag" style="left:466px;top:326.6px;width:44px;height:25px;line-height:25px;background:#e8f3ff;color:#165dff;font-size:13px">成功</div>
<div class="td lt" style="left:563px;top:329.6px">2025-03-29 17:42:50</div>
<div class="line" style="left:21px;top:361.6px;width:703.0px"></div>
<div class="td lt" style="left:38px;top:373.7px">127.0.0.1 - 内网IP - Mozilla/5.0 (Windows NT 10.0; Win64;...</div>
<div class="tag" style="left:466px;top:371.7px;width:44px;height:25px;line-height:25px;background:#e8f3ff;color:#165dff;font-size:13px">成功</div>
<div class="td lt" style="left:563px;top:374.7px">2025-03-22 01:01:31</div>
<div class="line" style="left:21px;top:406.7px;width:703.0px"></div>
<div class="td lt" style="left:38px;top:418.8px">127.0.0.1 - 内网IP - Mozilla/5.0 (Windows NT 10.0; Win64;...</div>
<div class="tag" style="left:466px;top:416.8px;width:44px;height:25px;line-height:25px;background:#e8f3ff;color:#165dff;font-size:13px">成功</div>
<div class="td lt" style="left:563px;top:419.8px">2025-03-22 00:42:34</div>
<div class="line" style="left:21px;top:451.8px;width:703.0px"></div>
<div class="td lt" style="left:38px;top:463.8px">127.0.0.1 - 内网IP - Mozilla/5.0 (Windows NT 10.0; Win64;...</div>
<div class="tag" style="left:466px;top:461.8px;width:44px;height:25px;line-height:25px;background:#e8f3ff;color:#165dff;font-size:13px">成功</div>
<div class="td lt" style="left:563px;top:464.8px">2025-03-21 23:53:43</div>
<div class="line" style="left:21px;top:496.8px;width:703.0px"></div>
</div>
<svg class="a" style="left:253px;top:98px;pointer-events:none" width="2301" height="1181">
<text x="-74.0" y="-51.2" transform="rotate(-22 -74.0 -56.2)" text-anchor="middle" font-size="18.5" fill="rgba(0,0,0,0.09)" stroke="rgba(0,0,0,0.07)" stroke-width="0.9" font-family="Liberation Sans">admin</text>
<text x="218.0" y="-51.2" transform="rotate(-22 218.0 -56.2)" text-anchor="middle" font-size="18.5" fill="rgba(0,0,0,0.09)" stroke="rgba(0,0,0,0.07)" stroke-width="0.9" font-family="Liberation Sans">admin</text>
<text x="510.0" y="-51.2" transform="rotate(-22 510.0 -56.2)" text-anchor="middle" font-size="18.5" fill="rgba(0,0,0,0.09)" stroke="rgba(0,0,0,0.07)" stroke-width="0.9" font-family="Liberation Sans">admin</text>
<text x="802.0" y="-51.2" transform="rotate(-22 802.0 -56.2)" text-anchor="middle" font-size="18.5" fill="rgba(0,0,0,0.09)" stroke="rgba(0,0,0,0.07)" stroke-width="0.9" font-family="Liberation Sans">admin</text>
<text x="1094.0" y="-51.2" transform="rotate(-22 1094.0 -56.2)" text-anchor="middle" font-size="18.5" fill="rgba(0,0,0,0.09)" stroke="rgba(0,0,0,0.07)" stroke-width="0.9" font-family="Liberation Sans">admin</text>
<text x="1386.0" y="-51.2" transform="rotate(-22 1386.0 -56.2)" text-anchor="middle" font-size="18.5" fill="rgba(0,0,0,0.09)" stroke="rgba(0,0,0,0.07)" stroke-width="0.9" font-family="Liberation Sans">admin</text>
<text x="1678.0" y="-51.2" transform="rotate(-22 1678.0 -56.2)" text-anchor="middle" font-size="18.5" fill="rgba(0,0,0,0.09)" stroke="rgba(0,0,0,0.07)" stroke-width="0.9" font-family="Liberation Sans">admin</text>
<text x="1970.0" y="-51.2" transform="rotate(-22 1970.0 -56.2)" text-anchor="middle" font-size="18.5" fill="rgba(0,0,0,0.09)" stroke="rgba(0,0,0,0.07)" stroke-width="0.9" font-family="Liberation Sans">admin</text>
<text x="2262.0" y="-51.2" transform="rotate(-22 2262.0 -56.2)" text-anchor="middle" font-size="18.5" fill="rgba(0,0,0,0.09)" stroke="rgba(0,0,0,0.07)" stroke-width="0.9" font-family="Liberation Sans">admin</text>
<text x="2554.0" y="-51.2" transform="rotate(-22 2554.0 -56.2)" text-anchor="middle" font-size="18.5" fill="rgba(0,0,0,0.09)" stroke="rgba(0,0,0,0.07)" stroke-width="0.9" font-family="Liberation Sans">admin</text>
<text x="-220.0" y="60.0" transform="rotate(-22 -220.0 55.0)" text-anchor="middle" font-size="18.5" fill="rgba(0,0,0,0.09)" stroke="rgba(0,0,0,0.07)" stroke-width="0.9" font-family="Liberation Sans">admin</text>
<text x="72.0" y="60.0" transform="rotate(-22 72.0 55.0)" text-anchor="middle" font-size="18.5" fill="rgba(0,0,0,0.09)" stroke="rgba(0,0,0,0.07)" stroke-width="0.9" font-family="Liberation Sans">admin</text>
<text x="364.0" y="60.0" transform="rotate(-22 364.0 55.0)" text-anchor="middle" font-size="18.5" fill="rgba(0,0,0,0.09)" stroke="rgba(0,0,0,0.07)" stroke-width="0.9" font-family="Liberation Sans">admin</text>
<text x="656.0" y="60.0" transform="rotate(-22 656.0 55.0)" text-anchor="middle" font-size="18.5" fill="rgba(0,0,0,0.09)" stroke="rgba(0,0,0,0.07)" stroke-width="0.9" font-family="Liberation Sans">admin</text>
<text x="948.0" y="60.0" transform="rotate(-22 948.0 55.0)" text-anchor="middle" font-size="18.5" fill="rgba(0,0,0,0.09)" stroke="rgba(0,0,0,0.07)" stroke-width="0.9" font-family="Liberation Sans">admin</text>
<text x="1240.0" y="60.0" transform="rotate(-22 1240.0 55.0)" text-anchor="middle" font-size="18.5" fill="rgba(0,0,0,0.09)" stroke="rgba(0,0,0,0.07)" stroke-width="0.9" font-family="Liberation Sans">admin</text>
<text x="1532.0" y="60.0" transform="rotate(-22 1532.0 55.0)" text-anchor="middle" font-size="18.5" fill="rgba(0,0,0,0.09)" stroke="rgba(0,0,0,0.07)" stroke-width="0.9" font-family="Liberation Sans">admin</text>
<text x="1824.0" y="60.0" transform="rotate(-22 1824.0 55.0)" text-anchor="middle" font-size="18.5" fill="rgba(0,0,0,0.09)" stroke="rgba(0,0,0,0.07)" stroke-width="0.9" font-family="Liberation Sans">admin</text>
<text x="2116.0" y="60.0" transform="rotate(-22 2116.0 55.0)" text-anchor="middle" font-size="18.5" fill="rgba(0,0,0,0.09)" stroke="rgba(0,0,0,0.07)" stroke-width="0.9" font-family="Liberation Sans">admin</text>
<text x="2408.0" y="60.0" transform="rotate(-22 2408.0 55.0)" text-anchor="middle" font-size="18.5" fill="rgba(0,0,0,0.09)" stroke="rgba(0,0,0,0.07)" stroke-width="0.9" font-family="Liberation Sans">admin</text>
<text x="-74.0" y="171.2" transform="rotate(-22 -74.0 166.2)" text-anchor="middle" font-size="18.5" fill="rgba(0,0,0,0.09)" stroke="rgba(0,0,0,0.07)" stroke-width="0.9" font-family="Liberation Sans">admin</text>
<text x="218.0" y="171.2" transform="rotate(-22 218.0 166.2)" text-anchor="middle" font-size="18.5" fill="rgba(0,0,0,0.09)" stroke="rgba(0,0,0,0.07)" stroke-width="0.9" font-family="Liberation Sans">admin</text>
<text x="510.0" y="171.2" transform="rotate(-22 510.0 166.2)" text-anchor="middle" font-size="18.5" fill="rgba(0,0,0,0.09)" stroke="rgba(0,0,0,0.07)" stroke-width="0.9" font-family="Liberation Sans">admin</text>
<text x="802.0" y="171.2" transform="rotate(-22 802.0 166.2)" text-anchor="middle" font-size="18.5" fill="rgba(0,0,0,0.09)" stroke="rgba(0,0,0,0.07)" stroke-width="0.9" font-family="Liberation Sans">admin</text>
<text x="1094.0" y="171.2" transform="rotate(-22 1094.0 166.2)" text-anchor="middle" font-size="18.5" fill="rgba(0,0,0,0.09)" stroke="rgba(0,0,0,0.07)" stroke-width="0.9" font-family="Liberation Sans">admin</text>
<text x="1386.0" y="171.2" transform="rotate(-22 1386.0 166.2)" text-anchor="middle" font-size="18.5" fill="rgba(0,0,0,0.09)" stroke="rgba(0,0,0,0.07)" stroke-width="0.9" font-family="Liberation Sans">admin</text>
<text x="1678.0" y="171.2" transform="rotate(-22 1678.0 166.2)" text-anchor="middle" font-size="18.5" fill="rgba(0,0,0,0.09)" stroke="rgba(0,0,0,0.07)" stroke-width="0.9" font-family="Liberation Sans">admin</text>
<text x="1970.0" y="171.2" transform="rotate(-22 1970.0 166.2)" text-anchor="middle" font-size="18.5" fill="rgba(0,0,0,0.09)" stroke="rgba(0,0,0,0.07)" stroke-width="0.9" font-family="Liberation Sans">admin</text>
<text x="2262.0" y="171.2" transform="rotate(-22 2262.0 166.2)" text-anchor="middle" font-size="18.5" fill="rgba(0,0,0,0.09)" stroke="rgba(0,0,0,0.07)" stroke-width="0.9" font-family="Liberation Sans">admin</text>
<text x="2554.0" y="171.2" transform="rotate(-22 2554.0 166.2)" text-anchor="middle" font-size="18.5" fill="rgba(0,0,0,0.09)" stroke="rgba(0,0,0,0.07)" stroke-width="0.9" font-family="Liberation Sans">admin</text>
<text x="-220.0" y="282.4" transform="rotate(-22 -220.0 277.4)" text-anchor="middle" font-size="18.5" fill="rgba(0,0,0,0.09)" stroke="rgba(0,0,0,0.07)" stroke-width="0.9" font-family="Liberation Sans">admin</text>
<text x="72.0" y="282.4" transform="rotate(-22 72.0 277.4)" text-anchor="middle" font-size="18.5" fill="rgba(0,0,0,0.09)" stroke="rgba(0,0,0,0.07)" stroke-width="0.9" font-family="Liberation Sans">admin</text>
<text x="364.0" y="282.4" transform="rotate(-22 364.0 277.4)" text-anchor="middle" font-size="18.5" fill="rgba(0,0,0,0.09)" stroke="rgba(0,0,0,0.07)" stroke-width="0.9" font-family="Liberation Sans">admin</text>
<text x="656.0" y="282.4" transform="rotate(-22 656.0 277.4)" text-anchor="middle" font-size="18.5" fill="rgba(0,0,0,0.09)" stroke="rgba(0,0,0,0.07)" stroke-width="0.9" font-family="Liberation Sans">admin</text>
<text x="948.0" y="282.4" transform="rotate(-22 948.0 277.4)" text-anchor="middle" font-size="18.5" fill="rgba(0,0,0,0.09)" stroke="rgba(0,0,0,0.07)" stroke-width="0.9" font-family="Liberation Sans">admin</text>
<text x="1240.0" y="282.4" transform="rotate(-22 1240.0 277.4)" text-anchor="middle" font-size="18.5" fill="rgba(0,0,0,0.09)" stroke="rgba(0,0,0,0.07)" stroke-width="0.9" font-family="Liberation Sans">admin</text>
<text x="1532.0" y="282.4" transform="rotate(-22 1532.0 277.4)" text-anchor="middle" font-size="18.5" fill="rgba(0,0,0,0.09)" stroke="rgba(0,0,0,0.07)" stroke-width="0.9" font-family="Liberation Sans">admin</text>
<text x="1824.0" y="282.4" transform="rotate(-22 1824.0 277.4)" text-anchor="middle" font-size="18.5" fill="rgba(0,0,0,0.09)" stroke="rgba(0,0,0,0.07)" stroke-width="0.9" font-family="Liberation Sans">admin</text>
<text x="2116.0" y="282.4" transform="rotate(-22 2116.0 277.4)" text-anchor="middle" font-size="18.5" fill="rgba(0,0,0,0.09)" stroke="rgba(0,0,0,0.07)" stroke-width="0.9" font-family="Liberation Sans">admin</text>
<text x="2408.0" y="282.4" transform="rotate(-22 2408.0 277.4)" text-anchor="middle" font-size="18.5" fill="rgba(0,0,0,0.09)" stroke="rgba(0,0,0,0.07)" stroke-width="0.9" font-family="Liberation Sans">admin</text>
<text x="-74.0" y="393.6" transform="rotate(-22 -74.0 388.6)" text-anchor="middle" font-size="18.5" fill="rgba(0,0,0,0.09)" stroke="rgba(0,0,0,0.07)" stroke-width="0.9" font-family="Liberation Sans">admin</text>
<text x="218.0" y="393.6" transform="rotate(-22 218.0 388.6)" text-anchor="middle" font-size="18.5" fill="rgba(0,0,0,0.09)" stroke="rgba(0,0,0,0.07)" stroke-width="0.9" font-family="Liberation Sans">admin</text>
<text x="510.0" y="393.6" transform="rotate(-22 510.0 388.6)" text-anchor="middle" font-size="18.5" fill="rgba(0,0,0,0.09)" stroke="rgba(0,0,0,0.07)" stroke-width="0.9" font-family="Liberation Sans">admin</text>
<text x="802.0" y="393.6" transform="rotate(-22 802.0 388.6)" text-anchor="middle" font-size="18.5" fill="rgba(0,0,0,0.09)" stroke="rgba(0,0,0,0.07)" stroke-width="0.9" font-family="Liberation Sans">admin</text>
<text x="1094.0" y="393.6" transform="rotate(-22 1094.0 388.6)" text-anchor="middle" font-size="18.5" fill="rgba(0,0,0,0.09)" stroke="rgba(0,0,0,0.07)" stroke-width="0.9" font-family="Liberation Sans">admin</text>
<text x="1386.0" y="393.6" transform="rotate(-22 1386.0 388.6)" text-anchor="middle" font-size="18.5" fill="rgba(0,0,0,0.09)" stroke="rgba(0,0,0,0.07)" stroke-width="0.9" font-family="Liberation Sans">admin</text>
<text x="1678.0" y="393.6" transform="rotate(-22 1678.0 388.6)" text-anchor="middle" font-size="18.5" fill="rgba(0,0,0,0.09)" stroke="rgba(0,0,0,0.07)" stroke-width="0.9" font-family="Liberation Sans">admin</text>
<text x="1970.0" y="393.6" transform="rotate(-22 1970.0 388.6)" text-anchor="middle" font-size="18.5" fill="rgba(0,0,0,0.09)" stroke="rgba(0,0,0,0.07)" stroke-width="0.9" font-family="Liberation Sans">admin</text>
<text x="2262.0" y="393.6" transform="rotate(-22 2262.0 388.6)" text-anchor="middle" font-size="18.5" fill="rgba(0,0,0,0.09)" stroke="rgba(0,0,0,0.07)" stroke-width="0.9" font-family="Liberation Sans">admin</text>
<text x="2554.0" y="393.6" transform="rotate(-22 2554.0 388.6)" text-anchor="middle" font-size="18.5" fill="rgba(0,0,0,0.09)" stroke="rgba(0,0,0,0.07)" stroke-width="0.9" font-family="Liberation Sans">admin</text>
<text x="-220.0" y="504.8" transform="rotate(-22 -220.0 499.8)" text-anchor="middle" font-size="18.5" fill="rgba(0,0,0,0.09)" stroke="rgba(0,0,0,0.07)" stroke-width="0.9" font-family="Liberation Sans">admin</text>
<text x="72.0" y="504.8" transform="rotate(-22 72.0 499.8)" text-anchor="middle" font-size="18.5" fill="rgba(0,0,0,0.09)" stroke="rgba(0,0,0,0.07)" stroke-width="0.9" font-family="Liberation Sans">admin</text>
<text x="364.0" y="504.8" transform="rotate(-22 364.0 499.8)" text-anchor="middle" font-size="18.5" fill="rgba(0,0,0,0.09)" stroke="rgba(0,0,0,0.07)" stroke-width="0.9" font-family="Liberation Sans">admin</text>
<text x="656.0" y="504.8" transform="rotate(-22 656.0 499.8)" text-anchor="middle" font-size="18.5" fill="rgba(0,0,0,0.09)" stroke="rgba(0,0,0,0.07)" stroke-width="0.9" font-family="Liberation Sans">admin</text>
<text x="948.0" y="504.8" transform="rotate(-22 948.0 499.8)" text-anchor="middle" font-size="18.5" fill="rgba(0,0,0,0.09)" stroke="rgba(0,0,0,0.07)" stroke-width="0.9" font-family="Liberation Sans">admin</text>
<text x="1240.0" y="504.8" transform="rotate(-22 1240.0 499.8)" text-anchor="middle" font-size="18.5" fill="rgba(0,0,0,0.09)" stroke="rgba(0,0,0,0.07)" stroke-width="0.9" font-family="Liberation Sans">admin</text>
<text x="1532.0" y="504.8" transform="rotate(-22 1532.0 499.8)" text-anchor="middle" font-size="18.5" fill="rgba(0,0,0,0.09)" stroke="rgba(0,0,0,0.07)" stroke-width="0.9" font-family="Liberation Sans">admin</text>
<text x="1824.0" y="504.8" transform="rotate(-22 1824.0 499.8)" text-anchor="middle" font-size="18.5" fill="rgba(0,0,0,0.09)" stroke="rgba(0,0,0,0.07)" stroke-width="0.9" font-family="Liberation Sans">admin</text>
<text x="2116.0" y="504.8" transform="rotate(-22 2116.0 499.8)" text-anchor="middle" font-size="18.5" fill="rgba(0,0,0,0.09)" stroke="rgba(0,0,0,0.07)" stroke-width="0.9" font-family="Liberation Sans">admin</text>
<text x="2408.0" y="504.8" transform="rotate(-22 2408.0 499.8)" text-anchor="middle" font-size="18.5" fill="rgba(0,0,0,0.09)" stroke="rgba(0,0,0,0.07)" stroke-width="0.9" font-family="Liberation Sans">admin</text>
<text x="-74.0" y="616.0" transform="rotate(-22 -74.0 611.0)" text-anchor="middle" font-size="18.5" fill="rgba(0,0,0,0.09)" stroke="rgba(0,0,0,0.07)" stroke-width="0.9" font-family="Liberation Sans">admin</text>
<text x="218.0" y="616.0" transform="rotate(-22 218.0 611.0)" text-anchor="middle" font-size="18.5" fill="rgba(0,0,0,0.09)" stroke="rgba(0,0,0,0.07)" stroke-width="0.9" font-family="Liberation Sans">admin</text>
<text x="510.0" y="616.0" transform="rotate(-22 510.0 611.0)" text-anchor="middle" font-size="18.5" fill="rgba(0,0,0,0.09)" stroke="rgba(0,0,0,0.07)" stroke-width="0.9" font-family="Liberation Sans">admin</text>
<text x="802.0" y="616.0" transform="rotate(-22 802.0 611.0)" text-anchor="middle" font-size="18.5" fill="rgba(0,0,0,0.09)" stroke="rgba(0,0,0,0.07)" stroke-width="0.9" font-family="Liberation Sans">admin</text>
<text x="1094.0" y="616.0" transform="rotate(-22 1094.0 611.0)" text-anchor="middle" font-size="18.5" fill="rgba(0,0,0,0.09)" stroke="rgba(0,0,0,0.07)" stroke-width="0.9" font-family="Liberation Sans">admin</text>
<text x="1386.0" y="616.0" transform="rotate(-22 1386.0 611.0)" text-anchor="middle" font-size="18.5" fill="rgba(0,0,0,0.09)" stroke="rgba(0,0,0,0.07)" stroke-width="0.9" font-family="Liberation Sans">admin</text>
<text x="1678.0" y="616.0" transform="rotate(-22 1678.0 611.0)" text-anchor="middle" font-size="18.5" fill="rgba(0,0,0,0.09)" stroke="rgba(0,0,0,0.07)" stroke-width="0.9" font-family="Liberation Sans">admin</text>
<text x="1970.0" y="616.0" transform="rotate(-22 1970.0 611.0)" text-anchor="middle" font-size="18.5" fill="rgba(0,0,0,0.09)" stroke="rgba(0,0,0,0.07)" stroke-width="0.9" font-family="Liberation Sans">admin</text>
<text x="2262.0" y="616.0" transform="rotate(-22 2262.0 611.0)" text-anchor="middle" font-size="18.5" fill="rgba(0,0,0,0.09)" stroke="rgba(0,0,0,0.07)" stroke-width="0.9" font-family="Liberation Sans">admin</text>
<text x="2554.0" y="616.0" transform="rotate(-22 2554.0 611.0)" text-anchor="middle" font-size="18.5" fill="rgba(0,0,0,0.09)" stroke="rgba(0,0,0,0.07)" stroke-width="0.9" font-family="Liberation Sans">admin</text>
<text x="-220.0" y="727.2" transform="rotate(-22 -220.0 722.2)" text-anchor="middle" font-size="18.5" fill="rgba(0,0,0,0.09)" stroke="rgba(0,0,0,0.07)" stroke-width="0.9" font-family="Liberation Sans">admin</text>
<text x="72.0" y="727.2" transform="rotate(-22 72.0 722.2)" text-anchor="middle" font-size="18.5" fill="rgba(0,0,0,0.09)" stroke="rgba(0,0,0,0.07)" stroke-width="0.9" font-family="Liberation Sans">admin</text>
<text x="364.0" y="727.2" transform="rotate(-22 364.0 722.2)" text-anchor="middle" font-size="18.5" fill="rgba(0,0,0,0.09)" stroke="rgba(0,0,0,0.07)" stroke-width="0.9" font-family="Liberation Sans">admin</text>
<text x="656.0" y="727.2" transform="rotate(-22 656.0 722.2)" text-anchor="middle" font-size="18.5" fill="rgba(0,0,0,0.09)" stroke="rgba(0,0,0,0.07)" stroke-width="0.9" font-family="Liberation Sans">admin</text>
<text x="948.0" y="727.2" transform="rotate(-22 948.0 722.2)" text-anchor="middle" font-size="18.5" fill="rgba(0,0,0,0.09)" stroke="rgba(0,0,0,0.07)" stroke-width="0.9" font-family="Liberation Sans">admin</text>
<text x="1240.0" y="727.2" transform="rotate(-22 1240.0 722.2)" text-anchor="middle" font-size="18.5" fill="rgba(0,0,0,0.09)" stroke="rgba(0,0,0,0.07)" stroke-width="0.9" font-family="Liberation Sans">admin</text>
<text x="1532.0" y="727.2" transform="rotate(-22 1532.0 722.2)" text-anchor="middle" font-size="18.5" fill="rgba(0,0,0,0.09)" stroke="rgba(0,0,0,0.07)" stroke-width="0.9" font-family="Liberation Sans">admin</text>
<text x="1824.0" y="727.2" transform="rotate(-22 1824.0 722.2)" text-anchor="middle" font-size="18.5" fill="rgba(0,0,0,0.09)" stroke="rgba(0,0,0,0.07)" stroke-width="0.9" font-family="Liberation Sans">admin</text>
<text x="2116.0" y="727.2" transform="rotate(-22 2116.0 722.2)" text-anchor="middle" font-size="18.5" fill="rgba(0,0,0,0.09)" stroke="rgba(0,0,0,0.07)" stroke-width="0.9" font-family="Liberation Sans">admin</text>
<text x="2408.0" y="727.2" transform="rotate(-22 2408.0 722.2)" text-anchor="middle" font-size="18.5" fill="rgba(0,0,0,0.09)" stroke="rgba(0,0,0,0.07)" stroke-width="0.9" font-family="Liberation Sans">admin</text>
<text x="-74.0" y="838.4" transform="rotate(-22 -74.0 833.4)" text-anchor="middle" font-size="18.5" fill="rgba(0,0,0,0.09)" stroke="rgba(0,0,0,0.07)" stroke-width="0.9" font-family="Liberation Sans">admin</text>
<text x="218.0" y="838.4" transform="rotate(-22 218.0 833.4)" text-anchor="middle" font-size="18.5" fill="rgba(0,0,0,0.09)" stroke="rgba(0,0,0,0.07)" stroke-width="0.9" font-family="Liberation Sans">admin</text>
<text x="510.0" y="838.4" transform="rotate(-22 510.0 833.4)" text-anchor="middle" font-size="18.5" fill="rgba(0,0,0,0.09)" stroke="rgba(0,0,0,0.07)" stroke-width="0.9" font-family="Liberation Sans">admin</text>
<text x="802.0" y="838.4" transform="rotate(-22 802.0 833.4)" text-anchor="middle" font-size="18.5" fill="rgba(0,0,0,0.09)" stroke="rgba(0,0,0,0.07)" stroke-width="0.9" font-family="Liberation Sans">admin</text>
<text x="1094.0" y="838.4" transform="rotate(-22 1094.0 833.4)" text-anchor="middle" font-size="18.5" fill="rgba(0,0,0,0.09)" stroke="rgba(0,0,0,0.07)" stroke-width="0.9" font-family="Liberation Sans">admin</text>
<text x="1386.0" y="838.4" transform="rotate(-22 1386.0 833.4)" text-anchor="middle" font-size="18.5" fill="rgba(0,0,0,0.09)" stroke="rgba(0,0,0,0.07)" stroke-width="0.9" font-family="Liberation Sans">admin</text>
<text x="1678.0" y="838.4" transform="rotate(-22 1678.0 833.4)" text-anchor="middle" font-size="18.5" fill="rgba(0,0,0,0.09)" stroke="rgba(0,0,0,0.07)" stroke-width="0.9" font-family="Liberation Sans">admin</text>
<text x="1970.0" y="838.4" transform="rotate(-22 1970.0 833.4)" text-anchor="middle" font-size="18.5" fill="rgba(0,0,0,0.09)" stroke="rgba(0,0,0,0.07)" stroke-width="0.9" font-family="Liberation Sans">admin</text>
<text x="2262.0" y="838.4" transform="rotate(-22 2262.0 833.4)" text-anchor="middle" font-size="18.5" fill="rgba(0,0,0,0.09)" stroke="rgba(0,0,0,0.07)" stroke-width="0.9" font-family="Liberation Sans">admin</text>
<text x="2554.0" y="838.4" transform="rotate(-22 2554.0 833.4)" text-anchor="middle" font-size="18.5" fill="rgba(0,0,0,0.09)" stroke="rgba(0,0,0,0.07)" stroke-width="0.9" font-family="Liberation Sans">admin</text>
<text x="-220.0" y="949.6" transform="rotate(-22 -220.0 944.6)" text-anchor="middle" font-size="18.5" fill="rgba(0,0,0,0.09)" stroke="rgba(0,0,0,0.07)" stroke-width="0.9" font-family="Liberation Sans">admin</text>
<text x="72.0" y="949.6" transform="rotate(-22 72.0 944.6)" text-anchor="middle" font-size="18.5" fill="rgba(0,0,0,0.09)" stroke="rgba(0,0,0,0.07)" stroke-width="0.9" font-family="Liberation Sans">admin</text>
<text x="364.0" y="949.6" transform="rotate(-22 364.0 944.6)" text-anchor="middle" font-size="18.5" fill="rgba(0,0,0,0.09)" stroke="rgba(0,0,0,0.07)" stroke-width="0.9" font-family="Liberation Sans">admin</text>
<text x="656.0" y="949.6" transform="rotate(-22 656.0 944.6)" text-anchor="middle" font-size="18.5" fill="rgba(0,0,0,0.09)" stroke="rgba(0,0,0,0.07)" stroke-width="0.9" font-family="Liberation Sans">admin</text>
<text x="948.0" y="949.6" transform="rotate(-22 948.0 944.6)" text-anchor="middle" font-size="18.5" fill="rgba(0,0,0,0.09)" stroke="rgba(0,0,0,0.07)" stroke-width="0.9" font-family="Liberation Sans">admin</text>
<text x="1240.0" y="949.6" transform="rotate(-22 1240.0 944.6)" text-anchor="middle" font-size="18.5" fill="rgba(0,0,0,0.09)" stroke="rgba(0,0,0,0.07)" stroke-width="0.9" font-family="Liberation Sans">admin</text>
<text x="1532.0" y="949.6" transform="rotate(-22 1532.0 944.6)" text-anchor="middle" font-size="18.5" fill="rgba(0,0,0,0.09)" stroke="rgba(0,0,0,0.07)" stroke-width="0.9" font-family="Liberation Sans">admin</text>
<text x="1824.0" y="949.6" transform="rotate(-22 1824.0 944.6)" text-anchor="middle" font-size="18.5" fill="rgba(0,0,0,0.09)" stroke="rgba(0,0,0,0.07)" stroke-width="0.9" font-family="Liberation Sans">admin</text>
<text x="2116.0" y="949.6" transform="rotate(-22 2116.0 944.6)" text-anchor="middle" font-size="18.5" fill="rgba(0,0,0,0.09)" stroke="rgba(0,0,0,0.07)" stroke-width="0.9" font-family="Liberation Sans">admin</text>
<text x="2408.0" y="949.6" transform="rotate(-22 2408.0 944.6)" text-anchor="middle" font-size="18.5" fill="rgba(0,0,0,0.09)" stroke="rgba(0,0,0,0.07)" stroke-width="0.9" font-family="Liberation Sans">admin</text>
<text x="-74.0" y="1060.8" transform="rotate(-22 -74.0 1055.8)" text-anchor="middle" font-size="18.5" fill="rgba(0,0,0,0.09)" stroke="rgba(0,0,0,0.07)" stroke-width="0.9" font-family="Liberation Sans">admin</text>
<text x="218.0" y="1060.8" transform="rotate(-22 218.0 1055.8)" text-anchor="middle" font-size="18.5" fill="rgba(0,0,0,0.09)" stroke="rgba(0,0,0,0.07)" stroke-width="0.9" font-family="Liberation Sans">admin</text>
<text x="510.0" y="1060.8" transform="rotate(-22 510.0 1055.8)" text-anchor="middle" font-size="18.5" fill="rgba(0,0,0,0.09)" stroke="rgba(0,0,0,0.07)" stroke-width="0.9" font-family="Liberation Sans">admin</text>
<text x="802.0" y="1060.8" transform="rotate(-22 802.0 1055.8)" text-anchor="middle" font-size="18.5" fill="rgba(0,0,0,0.09)" stroke="rgba(0,0,0,0.07)" stroke-width="0.9" font-family="Liberation Sans">admin</text>
<text x="1094.0" y="1060.8" transform="rotate(-22 1094.0 1055.8)" text-anchor="middle" font-size="18.5" fill="rgba(0,0,0,0.09)" stroke="rgba(0,0,0,0.07)" stroke-width="0.9" font-family="Liberation Sans">admin</text>
<text x="1386.0" y="1060.8" transform="rotate(-22 1386.0 1055.8)" text-anchor="middle" font-size="18.5" fill="rgba(0,0,0,0.09)" stroke="rgba(0,0,0,0.07)" stroke-width="0.9" font-family="Liberation Sans">admin</text>
<text x="1678.0" y="1060.8" transform="rotate(-22 1678.0 1055.8)" text-anchor="middle" font-size="18.5" fill="rgba(0,0,0,0.09)" stroke="rgba(0,0,0,0.07)" stroke-width="0.9" font-family="Liberation Sans">admin</text>
<text x="1970.0" y="1060.8" transform="rotate(-22 1970.0 1055.8)" text-anchor="middle" font-size="18.5" fill="rgba(0,0,0,0.09)" stroke="rgba(0,0,0,0.07)" stroke-width="0.9" font-family="Liberation Sans">admin</text>
<text x="2262.0" y="1060.8" transform="rotate(-22 2262.0 1055.8)" text-anchor="middle" font-size="18.5" fill="rgba(0,0,0,0.09)" stroke="rgba(0,0,0,0.07)" stroke-width="0.9" font-family="Liberation Sans">admin</text>
<text x="2554.0" y="1060.8" transform="rotate(-22 2554.0 1055.8)" text-anchor="middle" font-size="18.5" fill="rgba(0,0,0,0.09)" stroke="rgba(0,0,0,0.07)" stroke-width="0.9" font-family="Liberation Sans">admin</text>
<text x="-220.0" y="1172.0" transform="rotate(-22 -220.0 1167.0)" text-anchor="middle" font-size="18.5" fill="rgba(0,0,0,0.09)" stroke="rgba(0,0,0,0.07)" stroke-width="0.9" font-family="Liberation Sans">admin</text>
<text x="72.0" y="1172.0" transform="rotate(-22 72.0 1167.0)" text-anchor="middle" font-size="18.5" fill="rgba(0,0,0,0.09)" stroke="rgba(0,0,0,0.07)" stroke-width="0.9" font-family="Liberation Sans">admin</text>
<text x="364.0" y="1172.0" transform="rotate(-22 364.0 1167.0)" text-anchor="middle" font-size="18.5" fill="rgba(0,0,0,0.09)" stroke="rgba(0,0,0,0.07)" stroke-width="0.9" font-family="Liberation Sans">admin</text>
<text x="656.0" y="1172.0" transform="rotate(-22 656.0 1167.0)" text-anchor="middle" font-size="18.5" fill="rgba(0,0,0,0.09)" stroke="rgba(0,0,0,0.07)" stroke-width="0.9" font-family="Liberation Sans">admin</text>
<text x="948.0" y="1172.0" transform="rotate(-22 948.0 1167.0)" text-anchor="middle" font-size="18.5" fill="rgba(0,0,0,0.09)" stroke="rgba(0,0,0,0.07)" stroke-width="0.9" font-family="Liberation Sans">admin</text>
<text x="1240.0" y="1172.0" transform="rotate(-22 1240.0 1167.0)" text-anchor="middle" font-size="18.5" fill="rgba(0,0,0,0.09)" stroke="rgba(0,0,0,0.07)" stroke-width="0.9" font-family="Liberation Sans">admin</text>
<text x="1532.0" y="1172.0" transform="rotate(-22 1532.0 1167.0)" text-anchor="middle" font-size="18.5" fill="rgba(0,0,0,0.09)" stroke="rgba(0,0,0,0.07)" stroke-width="0.9" font-family="Liberation Sans">admin</text>
<text x="1824.0" y="1172.0" transform="rotate(-22 1824.0 1167.0)" text-anchor="middle" font-size="18.5" fill="rgba(0,0,0,0.09)" stroke="rgba(0,0,0,0.07)" stroke-width="0.9" font-family="Liberation Sans">admin</text>
<text x="2116.0" y="1172.0" transform="rotate(-22 2116.0 1167.0)" text-anchor="middle" font-size="18.5" fill="rgba(0,0,0,0.09)" stroke="rgba(0,0,0,0.07)" stroke-width="0.9" font-family="Liberation Sans">admin</text>
<text x="2408.0" y="1172.0" transform="rotate(-22 2408.0 1167.0)" text-anchor="middle" font-size="18.5" fill="rgba(0,0,0,0.09)" stroke="rgba(0,0,0,0.07)" stroke-width="0.9" font-family="Liberation Sans">admin</text>
<text x="-74.0" y="1283.2" transform="rotate(-22 -74.0 1278.2)" text-anchor="middle" font-size="18.5" fill="rgba(0,0,0,0.09)" stroke="rgba(0,0,0,0.07)" stroke-width="0.9" font-family="Liberation Sans">admin</text>
<text x="218.0" y="1283.2" transform="rotate(-22 218.0 1278.2)" text-anchor="middle" font-size="18.5" fill="rgba(0,0,0,0.09)" stroke="rgba(0,0,0,0.07)" stroke-width="0.9" font-family="Liberation Sans">admin</text>
<text x="510.0" y="1283.2" transform="rotate(-22 510.0 1278.2)" text-anchor="middle" font-size="18.5" fill="rgba(0,0,0,0.09)" stroke="rgba(0,0,0,0.07)" stroke-width="0.9" font-family="Liberation Sans">admin</text>
<text x="802.0" y="1283.2" transform="rotate(-22 802.0 1278.2)" text-anchor="middle" font-size="18.5" fill="rgba(0,0,0,0.09)" stroke="rgba(0,0,0,0.07)" stroke-width="0.9" font-family="Liberation Sans">admin</text>
<text x="1094.0" y="1283.2" transform="rotate(-22 1094.0 1278.2)" text-anchor="middle" font-size="18.5" fill="rgba(0,0,0,0.09)" stroke="rgba(0,0,0,0.07)" stroke-width="0.9" font-family="Liberation Sans">admin</text>
<text x="1386.0" y="1283.2" transform="rotate(-22 1386.0 1278.2)" text-anchor="middle" font-size="18.5" fill="rgba(0,0,0,0.09)" stroke="rgba(0,0,0,0.07)" stroke-width="0.9" font-family="Liberation Sans">admin</text>
<text x="1678.0" y="1283.2" transform="rotate(-22 1678.0 1278.2)" text-anchor="middle" font-size="18.5" fill="rgba(0,0,0,0.09)" stroke="rgba(0,0,0,0.07)" stroke-width="0.9" font-family="Liberation Sans">admin</text>
<text x="1970.0" y="1283.2" transform="rotate(-22 1970.0 1278.2)" text-anchor="middle" font-size="18.5" fill="rgba(0,0,0,0.09)" stroke="rgba(0,0,0,0.07)" stroke-width="0.9" font-family="Liberation Sans">admin</text>
<text x="2262.0" y="1283.2" transform="rotate(-22 2262.0 1278.2)" text-anchor="middle" font-size="18.5" fill="rgba(0,0,0,0.09)" stroke="rgba(0,0,0,0.07)" stroke-width="0.9" font-family="Liberation Sans">admin</text>
<text x="2554.0" y="1283.2" transform="rotate(-22 2554.0 1278.2)" text-anchor="middle" font-size="18.5" fill="rgba(0,0,0,0.09)" stroke="rgba(0,0,0,0.07)" stroke-width="0.9" font-family="Liberation Sans">admin</text>
</svg>
<div class="a" style="left:2554px;top:0;width:6px;height:98px;background:#fff"></div>
<div class="a" style="left:2554px;top:98px;width:6px;height:1181px;background:#f8f9fa"></div>
<div class="a" style="left:2555px;top:1px;width:4px;height:1215px;border-radius:2px;background:#c9cdd4"></div>
</body></html>
